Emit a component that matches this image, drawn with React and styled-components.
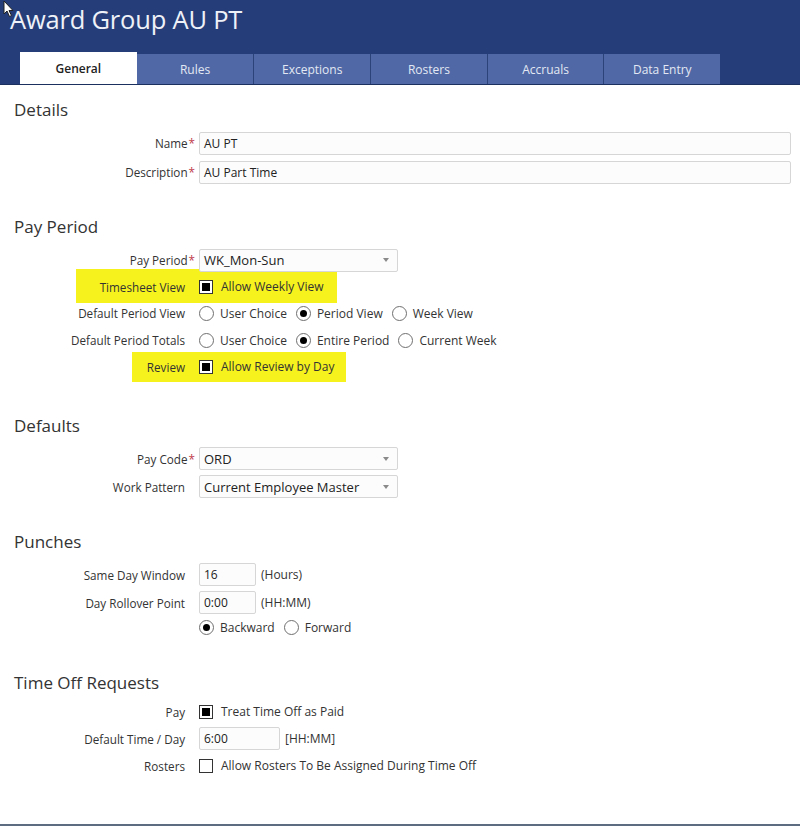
import React from "react";
import styled, { createGlobalStyle } from "styled-components";

const GlobalStyle = createGlobalStyle`
  html, body {
    margin: 0;
    padding: 0;
    background: #ffffff;
    font-family: "Open Sans", "Noto Sans", "Liberation Sans", sans-serif;
    color: #333333;
  }
`;

const Page = styled.div`
  width: 800px;
  height: 826px;
  position: relative;
  overflow: hidden;
  border-bottom: 2px solid #5d6c80;
  box-sizing: border-box;
`;

const Header = styled.div`
  background: #253e79;
  height: 84px;
  display: flex;
  flex-direction: column;
  justify-content: space-between;
  border-bottom: 1px solid #1c3060;
`;

const Title = styled.h1`
  margin: 0;
  padding: 2px 0 0 10px;
  font-size: 25.5px;
  font-weight: 400;
  color: #eef1f8;
  line-height: 34px;
  letter-spacing: -0.2px;
`;

const Tabs = styled.div`
  display: flex;
  align-items: flex-end;
  padding-left: 20px;
  height: 32px;
`;

const Tab = styled.div`
  width: 116.7px;
  height: ${(p) => (p.active ? "32px" : "30px")};
  background: ${(p) => (p.active ? "#ffffff" : "#5068a5")};
  color: ${(p) => (p.active ? "#222222" : "#e3e8f4")};
  font-weight: ${(p) => (p.active ? 600 : 400)};
  font-size: 12px;
  display: flex;
  align-items: center;
  justify-content: center;
  border-left: ${(p) => (p.first || p.active ? "none" : "1px solid #2b4378")};
  box-sizing: border-box;
`;

const Content = styled.div`
  padding: 13px 0 0 14px;
`;

const Section = styled.section`
  margin-top: ${(p) => p.top || 0}px;
`;

const Heading = styled.h2`
  margin: 0 0 ${(p) => p.after || 9}px 0;
  font-size: 17px;
  font-weight: 400;
  line-height: 24px;
  color: #333333;
`;

const Rows = styled.div`
  display: flex;
  flex-direction: column;
  gap: ${(p) => p.gap ?? 3}px;
`;

const Row = styled.div`
  position: relative;
  display: grid;
  grid-template-columns: 181px 1fr;
  column-gap: 4px;
  align-items: center;
  min-height: ${(p) => p.h || 24}px;
  margin-right: 9px;
`;

const Highlight = styled.div`
  position: absolute;
  left: ${(p) => p.left}px;
  width: ${(p) => p.width}px;
  top: ${(p) => p.top}px;
  height: ${(p) => p.height}px;
  background: #f6f21d;
  z-index: 0;
`;

const Label = styled.div`
  position: relative;
  z-index: 1;
  text-align: right;
  font-size: 11.7px;
  color: #333333;
  padding-right: ${(p) => (p.required ? 0 : 10)}px;
  white-space: nowrap;
`;

const Star = styled.span`
  color: #c0394b;
  margin-left: 1px;
`;

const Control = styled.div`
  position: relative;
  z-index: 1;
  display: flex;
  align-items: center;
  gap: 5px;
  font-size: 12px;
  color: #333333;
`;

const TextBox = styled.div`
  width: ${(p) => (p.w ? `${p.w}px` : "100%")};
  height: 23px;
  box-sizing: border-box;
  border: 1px solid #d6d6d6;
  border-radius: 2px;
  background: #fcfcfc;
  padding: 0 4px;
  display: flex;
  align-items: center;
  font-size: 12px;
  color: #222222;
`;

const Select = styled(TextBox)`
  width: 199px;
  justify-content: space-between;
  font-size: 13px;
`;

const Caret = styled.span`
  width: 0;
  height: 0;
  border-left: 3.5px solid transparent;
  border-right: 3.5px solid transparent;
  border-top: 4px solid #8a8a8a;
  margin-right: 4px;
`;

const Option = styled.label`
  display: flex;
  align-items: center;
  gap: 6px;
  margin-right: 4px;
`;

const Box = styled.span`
  width: 14px;
  height: 14px;
  margin-right: 2px;
  box-sizing: border-box;
  border: 1px solid #333333;
  background: #ffffff;
  display: flex;
  align-items: center;
  justify-content: center;
  &::after {
    content: "";
    width: 8px;
    height: 8px;
    background: ${(p) => (p.checked ? "#000000" : "transparent")};
  }
`;

const Radio = styled.span`
  width: 15px;
  height: 15px;
  box-sizing: border-box;
  border: 1px solid #6f6f6f;
  border-radius: 50%;
  background: #ffffff;
  display: flex;
  align-items: center;
  justify-content: center;
  &::after {
    content: "";
    width: 7px;
    height: 7px;
    border-radius: 50%;
    background: ${(p) => (p.checked ? "#000000" : "transparent")};
  }
`;

const Unit = styled.span`
  font-size: 12px;
  color: #333333;
`;

const Cursor = styled.svg`
  position: absolute;
  left: 3px;
  top: 0;
`;

const CheckOption = ({ checked, children }) => (
  <Option>
    <Box checked={checked} />
    {children}
  </Option>
);

const RadioOption = ({ checked, children }) => (
  <Option>
    <Radio checked={checked} />
    {children}
  </Option>
);

const tabs = ["General", "Rules", "Exceptions", "Rosters", "Accruals", "Data Entry"];

const App = () => {
  return (
    <Page>
      <GlobalStyle />
      <Header>
        <Title>Award Group AU PT</Title>
        <Tabs>
          {tabs.map((t, i) => (
            <Tab key={t} active={i === 0} first={i === 1}>
              {t}
            </Tab>
          ))}
        </Tabs>
      </Header>
      <Cursor width="12" height="18" viewBox="0 0 12 18">
        <path d="M1 1 L1 14 L4 11 L6.5 16.5 L8.5 15.5 L6 10.5 L10 10.5 Z" fill="#ffffff" stroke="#222222" strokeWidth="1" />
      </Cursor>

      <Content>
        <Section>
          <Heading>Details</Heading>
          <Rows gap={5}>
            <Row>
              <Label required>
                Name<Star>*</Star>
              </Label>
              <Control>
                <TextBox>AU PT</TextBox>
              </Control>
            </Row>
            <Row>
              <Label required>
                Description<Star>*</Star>
              </Label>
              <Control>
                <TextBox>AU Part Time</TextBox>
              </Control>
            </Row>
          </Rows>
        </Section>

        <Section top={31}>
          <Heading>Pay Period</Heading>
          <Rows gap={2.7}>
            <Row>
              <Label required>
                Pay Period<Star>*</Star>
              </Label>
              <Control>
                <Select>
                  WK_Mon-Sun
                  <Caret />
                </Select>
              </Control>
            </Row>
            <Row>
              <Highlight left={62} width={261} top={-6} height={34} />
              <Label>Timesheet View</Label>
              <Control>
                <CheckOption checked>Allow Weekly View</CheckOption>
              </Control>
            </Row>
            <Row>
              <Label>Default Period View</Label>
              <Control>
                <RadioOption>User Choice</RadioOption>
                <RadioOption checked>Period View</RadioOption>
                <RadioOption>Week View</RadioOption>
              </Control>
            </Row>
            <Row>
              <Label>Default Period Totals</Label>
              <Control>
                <RadioOption>User Choice</RadioOption>
                <RadioOption checked>Entire Period</RadioOption>
                <RadioOption>Current Week</RadioOption>
              </Control>
            </Row>
            <Row>
              <Highlight left={118} width={214} top={-3} height={30} />
              <Label>Review</Label>
              <Control>
                <CheckOption checked>Allow Review by Day</CheckOption>
              </Control>
            </Row>
          </Rows>
        </Section>

        <Section top={35}>
          <Heading>Defaults</Heading>
          <Rows gap={4}>
            <Row>
              <Label required>
                Pay Code<Star>*</Star>
              </Label>
              <Control>
                <Select>
                  ORD
                  <Caret />
                </Select>
              </Control>
            </Row>
            <Row>
              <Label>Work Pattern</Label>
              <Control>
                <Select>
                  Current Employee Master
                  <Caret />
                </Select>
              </Control>
            </Row>
          </Rows>
        </Section>

        <Section top={31}>
          <Heading>Punches</Heading>
          <Rows gap={4}>
            <Row>
              <Label>Same Day Window</Label>
              <Control>
                <TextBox w={57}>16</TextBox>
                <Unit>(Hours)</Unit>
              </Control>
            </Row>
            <Row>
              <Label>Day Rollover Point</Label>
              <Control>
                <TextBox w={57}>0:00</TextBox>
                <Unit>(HH:MM)</Unit>
              </Control>
            </Row>
            <Row h={16}>
              <Label />
              <Control>
                <RadioOption checked>Backward</RadioOption>
                <RadioOption>Forward</RadioOption>
              </Control>
            </Row>
          </Rows>
        </Section>

        <Section top={35}>
          <Heading after={5}>Time Off Requests</Heading>
          <Rows>
            <Row>
              <Label>Pay</Label>
              <Control>
                <CheckOption checked>Treat Time Off as Paid</CheckOption>
              </Control>
            </Row>
            <Row>
              <Label>Default Time / Day</Label>
              <Control>
                <TextBox w={81}>6:00</TextBox>
                <Unit>[HH:MM]</Unit>
              </Control>
            </Row>
            <Row>
              <Label>Rosters</Label>
              <Control>
                <CheckOption>Allow Rosters To Be Assigned During Time Off</CheckOption>
              </Control>
            </Row>
          </Rows>
        </Section>
      </Content>
    </Page>
  );
};

export default App;
